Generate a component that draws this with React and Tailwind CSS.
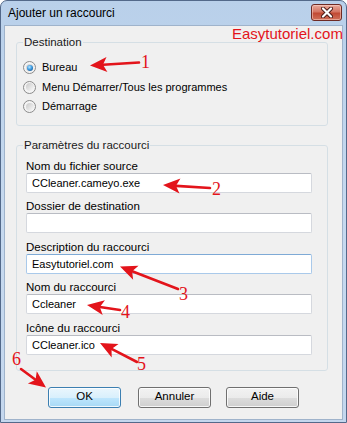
import React from "react";

const RED = "#e3141b";

function Arrow({ x1, y1, x2, y2, L = 17, W = 7.5 }) {
  const dx = x2 - x1, dy = y2 - y1;
  const len = Math.hypot(dx, dy);
  const ux = dx / len, uy = dy / len;
  const notch = 4;
  const bx = x2 - ux * L, by = y2 - uy * L;
  const px = -uy, py = ux;
  const p1 = `${bx + px * W},${by + py * W}`;
  const p2 = `${bx - px * W},${by - py * W}`;
  const nx = x2 - ux * (L - notch), ny = y2 - uy * (L - notch);
  return (
    <g>
      <line x1={x1} y1={y1} x2={nx} y2={ny} stroke={RED} strokeWidth="2.6" strokeLinecap="round" />
      <polygon points={`${x2},${y2} ${p1} ${nx},${ny} ${p2}`} fill={RED} />
    </g>
  );
}

function Radio({ checked, label }) {
  return (
    <div className="flex items-center h-[19.5px]">
      <span className="relative w-[13px] h-[13px] rounded-full border border-[#8b8b8b] bg-[#f4f4f4] shrink-0">
        <span className="absolute inset-[1.5px] rounded-full bg-gradient-to-br from-[#c9c9c9] to-[#fbfbfb]" />
        {checked && (
          <span className="absolute left-[2.5px] top-[2.5px] w-[6px] h-[6px] rounded-full bg-[radial-gradient(circle_at_40%_35%,#b6e6ff_0%,#3d9ae0_45%,#0e3f72_100%)]" />
        )}
      </span>
      <span className="ml-[6px] text-[11px] leading-[13px] text-black">{label}</span>
    </div>
  );
}

function Field({ label, value, focused }) {
  return (
    <div className="flex flex-col">
      <div className="h-[14px] leading-[14px] text-[11.5px] text-black">{label}</div>
      <input
        readOnly
        value={value}
        className={
          "h-[20px] w-[286px] bg-white pl-[5px] text-[11px] text-black outline-none rounded-[2px] font-['Liberation_Sans',Arial,sans-serif] border " +
          (focused
            ? "border-[#a9c9ea] border-t-[#7eaad6]"
            : "border-[#d5d8de] border-t-[#b9bcc3]")
        }
      />
    </div>
  );
}

function Btn({ children, def, className }) {
  return (
    <div
      className={
        "w-[73px] h-[21px] rounded-[3px] border flex items-center justify-center text-[11.5px] text-black shadow-[inset_0_0_0_1px_rgba(255,255,255,0.8)] " +
        (def
          ? "border-[#3c7fb1] bg-[linear-gradient(to_bottom,#eaf6fd_0%,#d9f0fc_50%,#bee6fd_51%,#a7d9f5_100%)] "
          : "border-[#707070] bg-[linear-gradient(to_bottom,#f2f2f2_0%,#ebebeb_50%,#dddddd_51%,#cfcfcf_100%)] ") +
        (className || "")
      }
    >
      {children}
    </div>
  );
}

export default function App() {
  return (
    <div className="w-[347px] h-[423px] relative flex flex-col rounded-t-[7px] border border-[#53698a] bg-gradient-to-b from-[#b9d0ea] via-[#c6d9ef] to-[#c4d7ee] overflow-hidden font-['Liberation_Sans',Arial,sans-serif]">
      {/* title bar */}
      <div className="h-[24px] flex items-start shrink-0">
        <div className="pl-[7px] pt-[5px] text-[12px] leading-[15px] text-black">Ajouter un raccourci</div>
        <div className="ml-auto mt-[3px] mr-[4px] w-[31px] h-[17px] rounded-[3px] border border-[#6e2a24] bg-[linear-gradient(to_bottom,#e9a99b_0%,#d47563_45%,#c14a34_55%,#d0705a_100%)] shadow-[inset_0_0_0_1px_rgba(255,220,210,0.5)] flex items-center justify-center">
          <svg width="12" height="11" viewBox="0 0 12 11">
            <path d="M2 1.5 L10 9.5 M10 1.5 L2 9.5" stroke="#4a1a16" strokeWidth="4" strokeLinecap="round" />
            <path d="M2 1.5 L10 9.5 M10 1.5 L2 9.5" stroke="#ffffff" strokeWidth="2.2" strokeLinecap="round" />
          </svg>
        </div>
      </div>

      {/* client area */}
      <div className="flex-1 ml-[3px] mr-[3px] mb-[2px] bg-[#f0f0f0] border border-[#9fb3cb] flex flex-col">
        <fieldset className="ml-[11px] mt-[10px] w-[312px] border border-[#d5dfe5] rounded-[3px] pl-[6px] pt-[9px] pb-[8px]">
          <legend className="px-[1px] text-[11.5px] leading-[13px] text-[#1a1a1a]">Destination</legend>
          <Radio checked label="Bureau" />
          <Radio label="Menu Démarrer/Tous les programmes" />
          <Radio label="Démarrage" />
        </fieldset>

        <fieldset className="ml-[11px] mt-[13px] w-[312px] border border-[#d5dfe5] rounded-[3px] pl-[6px] pt-[7px] pb-[15px]">
          <legend className="px-[1px] text-[11.5px] leading-[13px] text-[#1a1a1a]">Paramètres du raccourci</legend>
          <div className="pl-[3px] flex flex-col gap-[6.5px]">
            <Field label="Nom du fichier source" value="CCleaner.cameyo.exe" />
            <Field label="Dossier de destination" value="" />
            <Field label="Description du raccourci" value="Easytutoriel.com" focused />
            <Field label="Nom du raccourci" value="Ccleaner" />
            <Field label="Icône du raccourci" value="CCleaner.ico" />
          </div>
        </fieldset>

        <div className="flex mt-[16px] ml-[43px]">
          <Btn def>OK</Btn>
          <Btn className="ml-[17px]">Annuler</Btn>
          <Btn className="ml-[15px]">Aide</Btn>
        </div>
      </div>

      {/* watermark */}
      <span className="absolute left-[231px] top-[24px] text-[15px] leading-[18px] text-[#e3141b] font-['Liberation_Sans',Arial,sans-serif]">
        Easytutoriel.com
      </span>

      {/* annotations */}
      <svg className="absolute left-[-1px] top-[-1px] pointer-events-none" width="347" height="423" viewBox="0 0 347 423">
        <Arrow x1={139} y1={62.5} x2={90} y2={65.5} />
        <Arrow x1={210} y1={188} x2={163} y2={185} />
        <Arrow x1={178} y1={289} x2={120} y2={266.5} />
        <Arrow x1={120} y1={310} x2={87} y2={305} />
        <Arrow x1={137} y1={362} x2={100} y2={343} />
        <Arrow x1={21} y1={369} x2={46} y2={387.5} />
        <g fill={RED} fontFamily="'Liberation Serif', 'Times New Roman', serif" fontSize="18">
          <text x="141" y="68">1</text>
          <text x="212" y="195">2</text>
          <text x="179" y="300">3</text>
          <text x="121" y="318">4</text>
          <text x="137" y="370">5</text>
          <text x="12" y="365">6</text>
        </g>
      </svg>
    </div>
  );
}
